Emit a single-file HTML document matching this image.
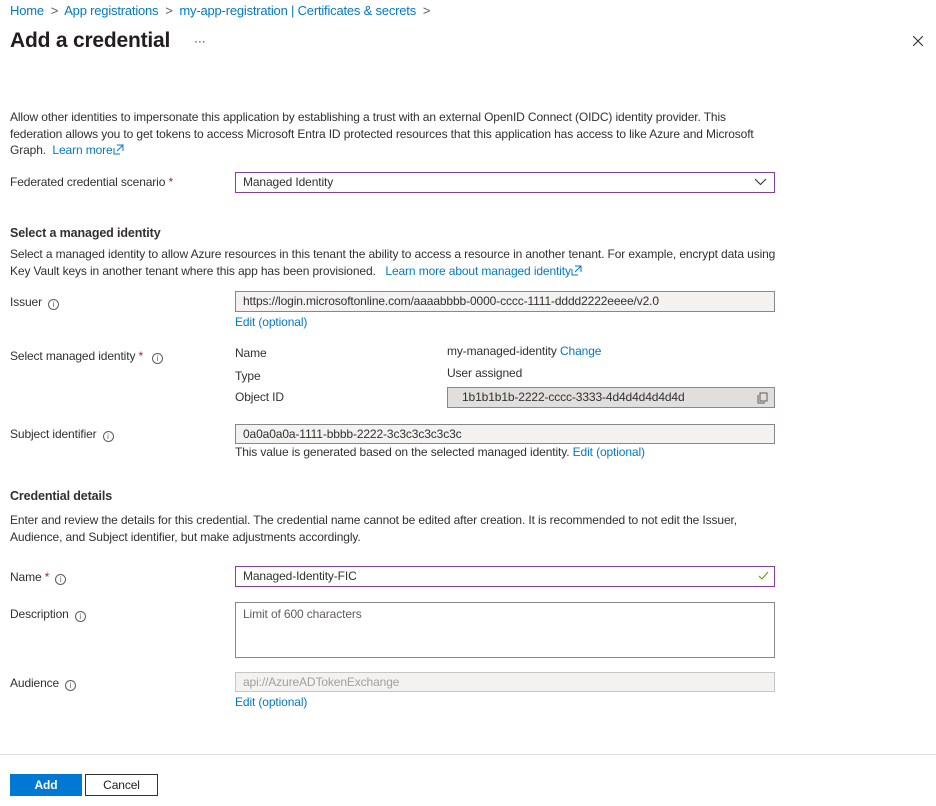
<!DOCTYPE html>
<html><head><meta charset="utf-8"><style>
*{margin:0;padding:0;box-sizing:border-box}
body{width:936px;height:806px;background:#fff;font-family:"Liberation Sans",sans-serif;font-size:12px;color:#323130;position:relative;overflow:hidden;letter-spacing:-0.12px}
.a{position:absolute;white-space:nowrap;line-height:16px}
.l{color:#0078d4}
.box{position:absolute;border:1px solid #8a8886;background:#f3f2f1;height:21px;padding-left:7px;line-height:19px;white-space:nowrap;color:#323130}
.i{display:inline-block;width:11px;height:11px;border:1px solid #605e5c;border-radius:50%;font-size:8px;line-height:9px;text-align:center;margin-left:6px;vertical-align:-1px;color:#605e5c;letter-spacing:0}
.r{color:#a4262c}
.b{font-weight:bold;font-size:12.5px}
</style></head><body>
<div class="a l" style="left:10px;top:3px;font-size:13px;letter-spacing:-0.2px">Home <span style="color:#605e5c">&nbsp;&gt;&nbsp;</span> App registrations <span style="color:#605e5c">&nbsp;&gt;&nbsp;</span> my-app-registration | Certificates &amp; secrets <span style="color:#605e5c">&nbsp;&gt;</span></div>
<div class="a" style="left:10px;top:28px;font-size:21px;line-height:26px;font-weight:600;color:#201f1e;letter-spacing:-0.2px">Add a credential</div>
<div class="a" style="left:194px;top:33px;font-size:12px">···</div>
<svg style="position:absolute;left:913px;top:36px" width="10" height="10"><path d="M0 0L10 10M10 0L0 10" stroke="#323130" stroke-width="1.1"/></svg>

<div class="a" style="left:10px;top:109px;line-height:16.5px">Allow other identities to impersonate this application by establishing a trust with an external OpenID Connect (OIDC) identity provider. This<br>federation allows you to get tokens to access Microsoft Entra ID protected resources that this application has access to like Azure and Microsoft<br>Graph. &nbsp;<span class="l">Learn more<svg width="11" height="11" style="vertical-align:-1px"><path d="M4 1H10V7M10 1L4 7M7 10H1V4" fill="none" stroke="#0078d4"/></svg></span></div>

<div class="a" style="left:10px;top:174px">Federated credential scenario <span class="r">*</span></div>
<div class="box" style="left:235px;top:172px;width:540px;background:#fff;border-color:#8a3ca8">Managed Identity</div>
<svg style="position:absolute;left:754px;top:178px" width="13" height="8"><path d="M1 1L6.5 6.5L12 1" fill="none" stroke="#323130" stroke-width="1.1"/></svg>

<div class="a b" style="left:10px;top:225px">Select a managed identity</div>
<div class="a" style="left:10px;top:246px;line-height:17px">Select a managed identity to allow Azure resources in this tenant the ability to access a resource in another tenant. For example, encrypt data using<br>Key Vault keys in another tenant where this app has been provisioned. &nbsp;&nbsp;<span class="l">Learn more about managed identity<svg width="11" height="11" style="vertical-align:-1px"><path d="M4 1H10V7M10 1L4 7M7 10H1V4" fill="none" stroke="#0078d4"/></svg></span></div>

<div class="a" style="left:10px;top:294px">Issuer<span class="i">i</span></div>
<div class="box" style="left:235px;top:291px;width:540px">https://login.microsoftonline.com/aaaabbbb-0000-cccc-1111-dddd2222eeee/v2.0</div>
<div class="a l" style="left:235px;top:314px">Edit (optional)</div>

<div class="a" style="left:10px;top:348px">Select managed identity <span class="r">*</span><span class="i" style="margin-left:9px">i</span></div>
<div class="a" style="left:235px;top:345px">Name</div>
<div class="a" style="left:447px;top:343px">my-managed-identity <span class="l">Change</span></div>
<div class="a" style="left:235px;top:368px">Type</div>
<div class="a" style="left:447px;top:365px">User assigned</div>
<div class="a" style="left:235px;top:389px">Object ID</div>
<div class="box" style="left:447px;top:387px;width:328px;background:#e1dfdd;padding-left:14px">1b1b1b1b-2222-cccc-3333-4d4d4d4d4d4d</div>
<svg style="position:absolute;left:757px;top:392px" width="11" height="12"><rect x="3" y="1" width="7" height="8" fill="none" stroke="#605e5c"/><path d="M1 3V11H8" fill="none" stroke="#605e5c"/></svg>

<div class="a" style="left:10px;top:426px">Subject identifier<span class="i">i</span></div>
<div class="box" style="left:235px;top:424px;width:540px;height:20px;line-height:18px">0a0a0a0a-1111-bbbb-2222-3c3c3c3c3c3c</div>
<div class="a" style="left:235px;top:444px">This value is generated based on the selected managed identity. <span class="l">Edit (optional)</span></div>

<div class="a b" style="left:10px;top:488px">Credential details</div>
<div class="a" style="left:10px;top:512px;line-height:17px">Enter and review the details for this credential. The credential name cannot be edited after creation. It is recommended to not edit the Issuer,<br>Audience, and Subject identifier, but make adjustments accordingly.</div>

<div class="a" style="left:10px;top:569px">Name <span class="r">*</span><span class="i">i</span></div>
<div class="box" style="left:235px;top:566px;width:540px;background:#fff;border-color:#8a3ca8">Managed-Identity-FIC</div>
<svg style="position:absolute;left:758px;top:571px" width="11" height="9"><path d="M1 5L4 8L10 1" fill="none" stroke="#57a300" stroke-width="1.1"/></svg>

<div class="a" style="left:10px;top:606px">Description<span class="i">i</span></div>
<div class="box" style="left:235px;top:602px;width:540px;height:56px;background:#fff;line-height:22px;color:#605e5c">Limit of 600 characters</div>

<div class="a" style="left:10px;top:675px">Audience<span class="i">i</span></div>
<div class="box" style="left:235px;top:672px;width:540px;height:20px;line-height:18px;color:#a19f9d;border-color:#c8c6c4">api://AzureADTokenExchange</div>
<div class="a l" style="left:235px;top:694px">Edit (optional)</div>

<div style="position:absolute;left:0;top:754px;width:936px;height:1px;background:#e1dfdd"></div>
<div class="a" style="left:10px;top:774px;width:72px;height:22px;background:#0078d4;color:#fff;font-weight:600;text-align:center;line-height:22px">Add</div>
<div class="a" style="left:85px;top:774px;width:73px;height:22px;border:1px solid #323130;text-align:center;line-height:20px;color:#201f1e">Cancel</div>
</body></html>
